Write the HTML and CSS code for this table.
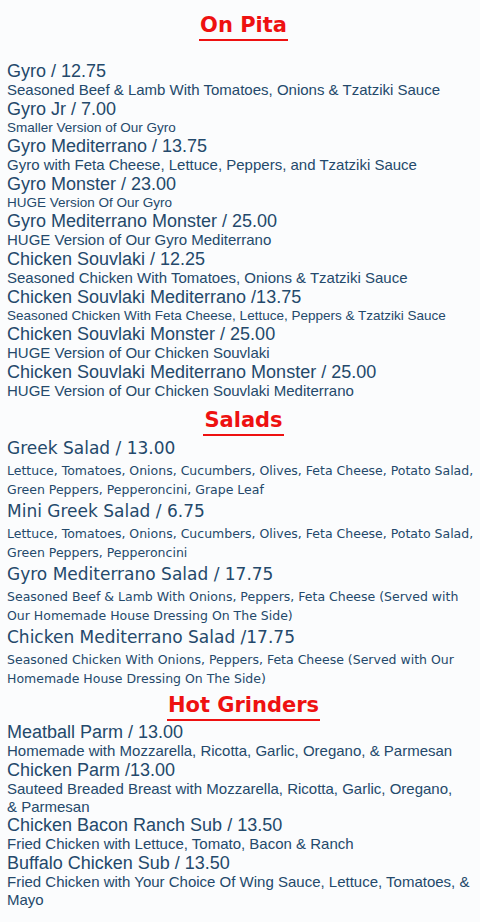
FILE: index.html
```html
<!DOCTYPE html>
<html lang="en">
<head>
<meta charset="utf-8">
<title>Menu</title>
<link rel="stylesheet" href="styles.css">
</head>
<body>
<main class="menu">
  <section class="section pita">
    <h2 class="heading"><span>On Pita</span></h2>
    <ul class="items">
      <li><h3 class="title">Gyro / 12.75</h3><p class="desc">Seasoned Beef &amp; Lamb With Tomatoes, Onions &amp; Tzatziki Sauce</p></li>
      <li><h3 class="title">Gyro Jr / 7.00</h3><p class="desc small">Smaller Version of Our Gyro</p></li>
      <li><h3 class="title">Gyro Mediterrano / 13.75</h3><p class="desc">Gyro with Feta Cheese, Lettuce, Peppers, and Tzatziki Sauce</p></li>
      <li><h3 class="title">Gyro Monster / 23.00</h3><p class="desc small">HUGE Version Of Our Gyro</p></li>
      <li><h3 class="title">Gyro Mediterrano Monster / 25.00</h3><p class="desc">HUGE Version of Our Gyro Mediterrano</p></li>
      <li><h3 class="title">Chicken Souvlaki / 12.25</h3><p class="desc">Seasoned Chicken With Tomatoes, Onions &amp; Tzatziki Sauce</p></li>
      <li><h3 class="title">Chicken Souvlaki Mediterrano /13.75</h3><p class="desc small">Seasoned Chicken With Feta Cheese, Lettuce, Peppers &amp; Tzatziki Sauce</p></li>
      <li><h3 class="title">Chicken Souvlaki Monster / 25.00</h3><p class="desc">HUGE Version of Our Chicken Souvlaki</p></li>
      <li><h3 class="title">Chicken Souvlaki Mediterrano Monster / 25.00</h3><p class="desc">HUGE Version of Our Chicken Souvlaki Mediterrano</p></li>
    </ul>
  </section>

  <section class="section salads">
    <h2 class="heading"><span>Salads</span></h2>
    <ul class="items">
      <li><h3 class="title">Greek Salad / 13.00</h3><p class="desc">Lettuce, Tomatoes, Onions, Cucumbers, Olives, Feta Cheese, Potato Salad, Green Peppers, Pepperoncini, Grape Leaf</p></li>
      <li><h3 class="title">Mini Greek Salad / 6.75</h3><p class="desc">Lettuce, Tomatoes, Onions, Cucumbers, Olives, Feta Cheese, Potato Salad, Green Peppers, Pepperoncini</p></li>
      <li><h3 class="title">Gyro Mediterrano Salad / 17.75</h3><p class="desc">Seasoned Beef &amp; Lamb With Onions, Peppers, Feta Cheese (Served with Our Homemade House Dressing On The Side)</p></li>
      <li><h3 class="title">Chicken Mediterrano Salad /17.75</h3><p class="desc">Seasoned Chicken With Onions, Peppers, Feta Cheese (Served with Our Homemade House Dressing On The Side)</p></li>
    </ul>
  </section>

  <section class="section grinders">
    <h2 class="heading"><span>Hot Grinders</span></h2>
    <ul class="items">
      <li><h3 class="title">Meatball Parm / 13.00</h3><p class="desc">Homemade with Mozzarella, Ricotta, Garlic, Oregano, &amp; Parmesan</p></li>
      <li><h3 class="title">Chicken Parm /13.00</h3><p class="desc">Sauteed Breaded Breast with Mozzarella, Ricotta, Garlic, Oregano, &amp;&nbsp;Parmesan</p></li>
      <li><h3 class="title">Chicken Bacon Ranch Sub / 13.50</h3><p class="desc">Fried Chicken with Lettuce, Tomato, Bacon &amp; Ranch</p></li>
      <li><h3 class="title">Buffalo Chicken Sub / 13.50</h3><p class="desc">Fried Chicken with Your Choice Of Wing Sauce, Lettuce, Tomatoes, &amp; Mayo</p></li>
    </ul>
  </section>
</main>
</body>
</html>
```

FILE: styles.css
```css
* { box-sizing: border-box; }
html, body {
  margin: 0;
  padding: 0;
  background: #fbfcfd;
}
body {
  font-family: "Liberation Sans", Arial, sans-serif;
  color: #24496b;
}
.menu {
  width: 480px;
  padding: 12px 0 0 7px;
  display: flex;
  flex-direction: column;
}
.heading {
  margin: 0;
  text-align: center;
  font-family: "DejaVu Sans", sans-serif;
  font-weight: bold;
  font-size: 21px;
  line-height: 26px;
  color: #ee1111;
}
.heading span {
  display: inline-block;
  border-bottom: 2.5px solid #ee1111;
  padding: 0 1px 1px;
}
.items {
  list-style: none;
  margin: 0;
  padding: 0;
}
.title {
  margin: 0;
  font-weight: normal;
  font-size: 18px;
  line-height: 20px;
}
.desc {
  margin: 0;
  font-size: 15px;
  line-height: 18px;
}
.desc.small { font-size: 13.5px; }

.pita .heading { margin-bottom: 20px; }
.pita .desc { line-height: 17.6px; }

.salads { margin-top: 8px; }
.salads .heading { margin-bottom: 1px; }
.salads .title {
  font-family: "DejaVu Sans", sans-serif;
  font-size: 17px;
  line-height: 22px;
}
.salads .desc {
  font-family: "DejaVu Sans", sans-serif;
  font-size: 12.5px;
  line-height: 19px;
  margin-top: 2px;
}
.salads .items li + li { margin-top: 1px; }

.grinders { margin-top: 4px; }
.grinders .heading { margin-bottom: 2px; }
.grinders .title { line-height: 19px; }
.grinders .desc { line-height: 18.3px; }
```
